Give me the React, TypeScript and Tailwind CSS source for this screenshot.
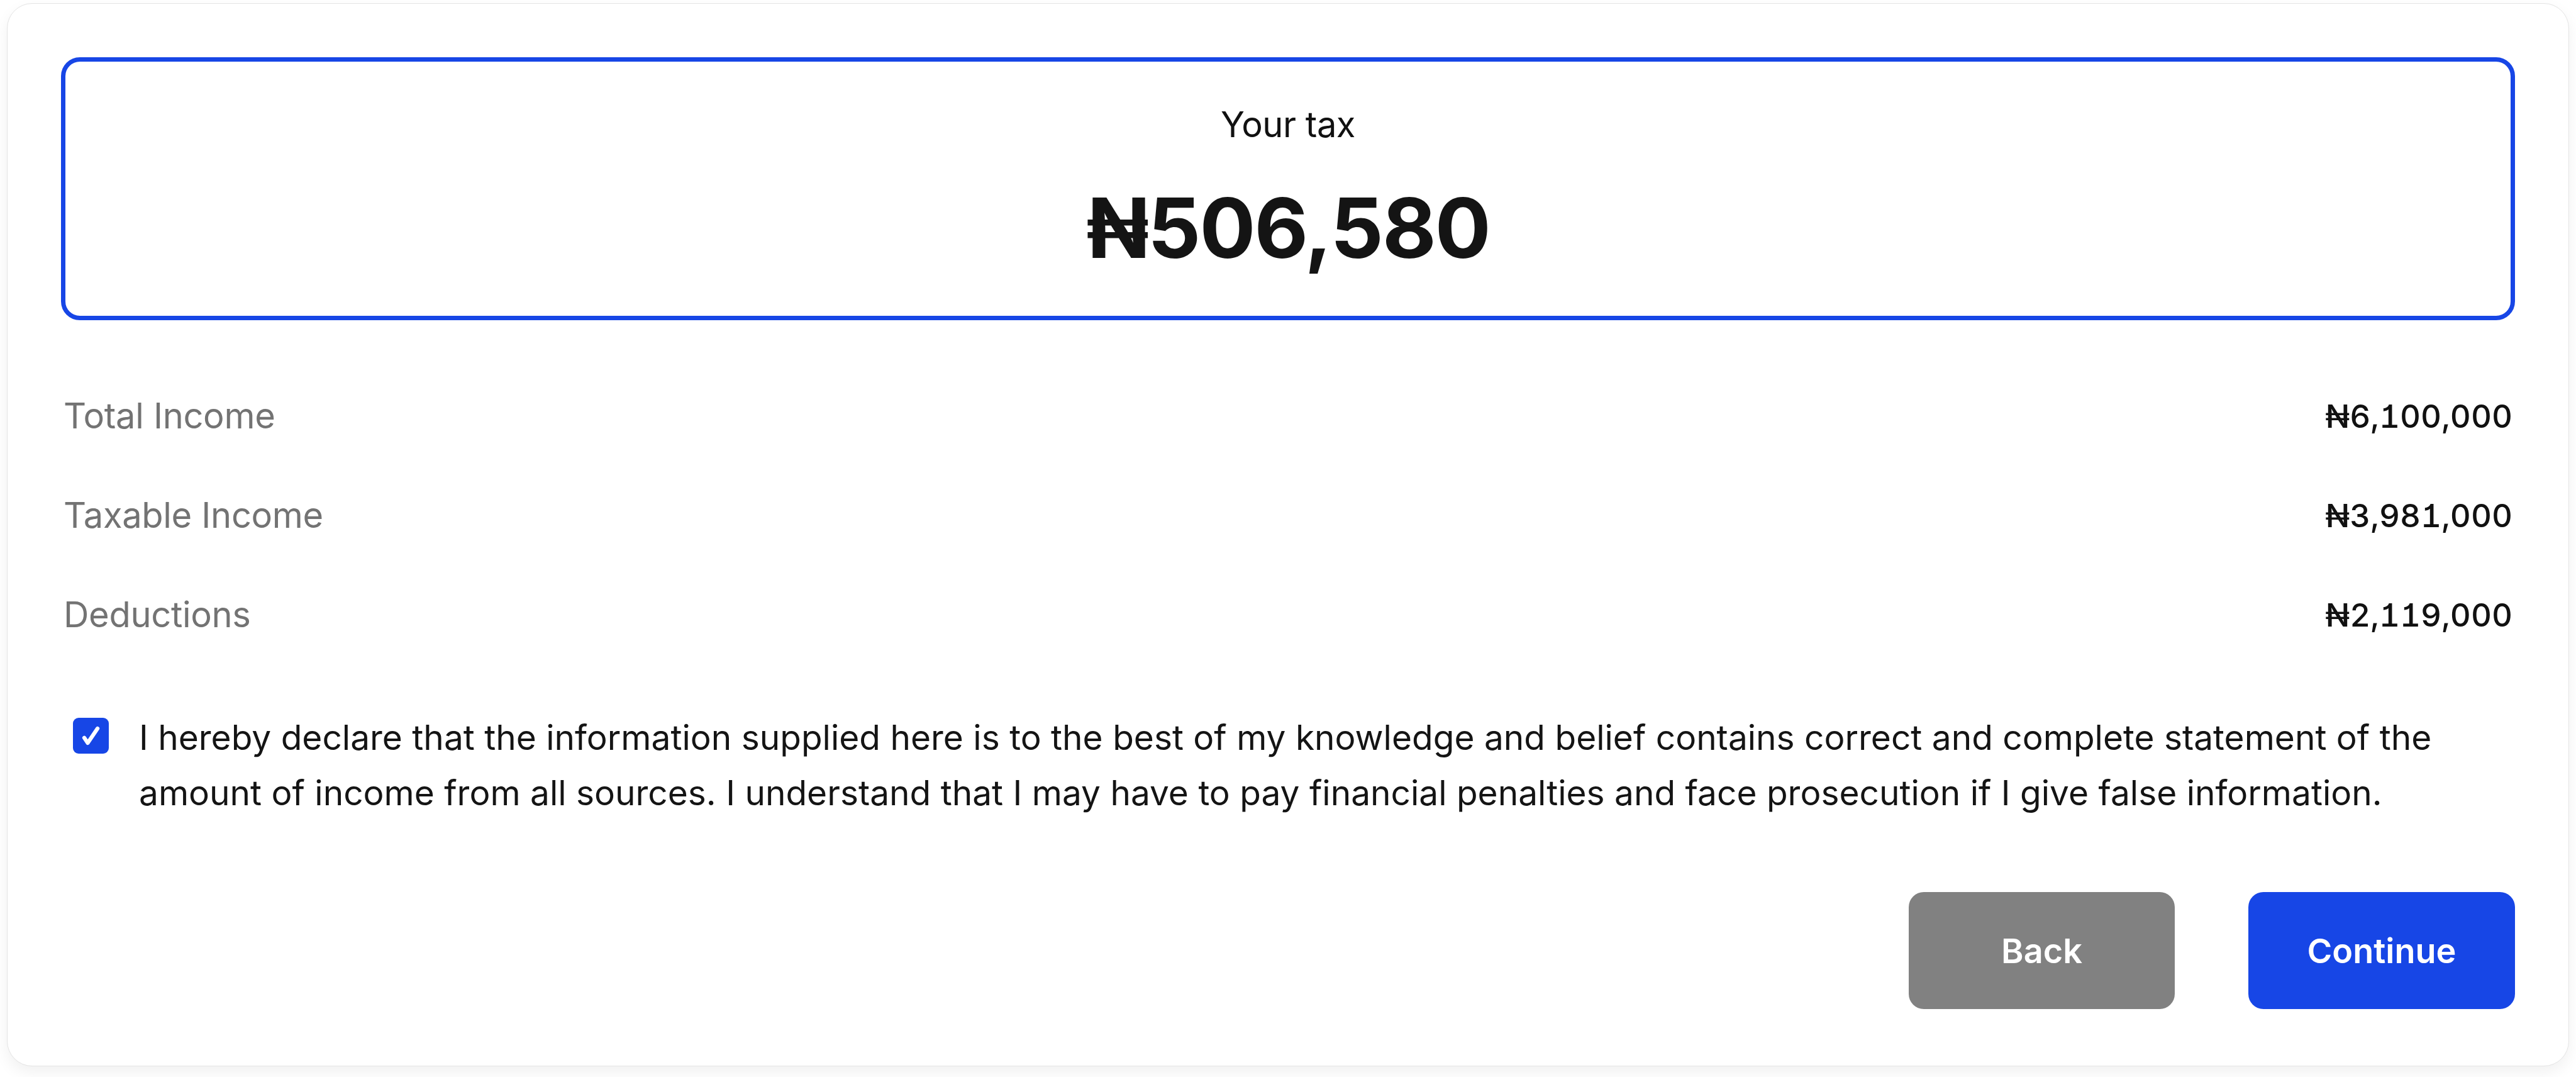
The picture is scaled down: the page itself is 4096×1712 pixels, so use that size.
export default function App() {
  const rows = [
    { label: "Total Income", value: "₦6,100,000" },
    { label: "Taxable Income", value: "₦3,981,000" },
    { label: "Deductions", value: "₦2,119,000" },
  ];

  return (
    <div className="min-h-screen w-full bg-white pt-[5px] px-[11px] font-['Inter',sans-serif]">
      <div className="w-full h-[1690px] rounded-[40px] bg-white border border-[#e4e4e4] shadow-[0_10px_24px_rgba(0,0,0,0.06)] px-[85px] pt-[85px] flex flex-col">
        {/* tax total */}
        <div className="rounded-[30px] border-[7px] border-[#1746e6] pt-[60px] pb-[70px] flex flex-col items-center">
          <p className="text-[56px] leading-[81px] text-[#111] font-normal tracking-[-0.5px]">Your tax</p>
          <p className="mt-[53px] text-[132px] leading-[140px] font-bold text-[#141414] tracking-[-2px]">₦506,580</p>
        </div>

        {/* breakdown */}
        <div className="mt-[112px] flex flex-col gap-[77px] px-[4px]">
          {rows.map((r) => (
            <div key={r.label} className="flex items-center justify-between h-[81px]">
              <span className="text-[56px] leading-[81px] text-[#737373] tracking-[-0.3px]">{r.label}</span>
              <span className="text-[51px] leading-[81px] font-medium text-[#111] [font-feature-settings:'cv01','tnum']">{r.value}</span>
            </div>
          ))}
        </div>

        {/* declaration */}
        <div className="mt-[110px] flex items-start">
          <div className="ml-[19px] mt-[13px] w-[57px] h-[57px] shrink-0 rounded-[9px] bg-[#1746e6] flex items-center justify-center">
            <svg width="44" height="44" viewBox="0 0 24 24" fill="none" stroke="white" strokeWidth="3.4" strokeLinecap="round" strokeLinejoin="round">
              <path d="M6 13.5 9 18 17.5 5.5" />
            </svg>
          </div>
          <p className="ml-[48px] text-[55px] leading-[88px] text-[#141414]">
            I hereby declare that the information supplied here is to the best of my knowledge and belief contains correct and complete statement of the amount of income from all sources. I understand that I may have to pay financial penalties and face prosecution if I give false information.
          </p>
        </div>

        {/* actions */}
        <div className="mt-[114px] flex justify-end gap-[117px]">
          <button className="w-[423px] h-[186px] rounded-[24px] bg-[#818181] text-white text-[54px] font-semibold">Back</button>
          <button className="w-[424px] h-[186px] rounded-[24px] bg-[#1746e6] text-white text-[54px] font-semibold">Continue</button>
        </div>
      </div>
    </div>
  );
}
